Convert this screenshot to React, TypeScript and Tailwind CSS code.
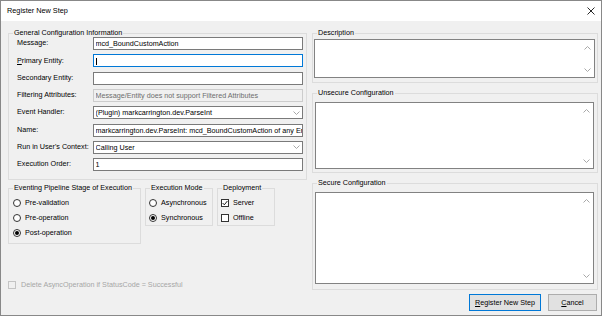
import React from 'react';

const Chevron = ({ up = false }: { up?: boolean }) => (
  <svg width="7" height="4" viewBox="0 0 7 4" className="block">
    <path d={up ? 'M0.5 3.5 L3.5 0.5 L6.5 3.5' : 'M0.5 0.5 L3.5 3.5 L6.5 0.5'} fill="none" stroke="#a8a8a8" strokeWidth="1" />
  </svg>
);

const Field = ({ label, children }: { label: React.ReactNode; children: React.ReactNode }) => (
  <div className="h-[17.3px] flex items-center">
    <div className="w-[76px] shrink-0">{label}</div>
    <div className="flex-1 min-w-0">{children}</div>
  </div>
);

const TextBox = ({ value, focused = false, disabled = false, combo = false }: { value?: string; focused?: boolean; disabled?: boolean; combo?: boolean }) => (
  <div
    className={`h-[13px] border flex items-center overflow-hidden whitespace-nowrap pl-[1.5px] ${
      focused ? 'border-[#0078d7] bg-white' : disabled ? 'border-[#cccccc] bg-[#f0f0f0] text-[#6d6d6d]' : 'border-[#7a7a7a] bg-white'
    }`}
  >
    <span className="flex-1 min-w-0 overflow-hidden leading-[11px]">
      {focused ? <span className="inline-block w-px h-[7px] bg-black align-middle ml-[0.5px]" /> : value}
    </span>
    {combo && (
      <span className="w-[12px] shrink-0 flex justify-center">
        <Chevron />
      </span>
    )}
  </div>
);

// group box: legend sits on the top line, padding goes on the inner div
const Group = ({ title, className, inner = '', children }: { title: string; className: string; inner?: string; children?: React.ReactNode }) => (
  <fieldset className={`border border-[#dcdcdc] min-w-0 ${className}`}>
    <legend className="ml-[4px] px-[1px] leading-[4px]">{title}</legend>
    <div className={inner}>{children}</div>
  </fieldset>
);

const Radio = ({ label, checked = false }: { label: string; checked?: boolean }) => (
  <div className="h-[15px] flex items-center gap-[4px]">
    <span className="w-[8px] h-[8px] rounded-full border border-[#333] bg-white flex items-center justify-center">
      {checked && <span className="w-[4px] h-[4px] rounded-full bg-black" />}
    </span>
    <span>{label}</span>
  </div>
);

const Check = ({ label, checked = false }: { label: string; checked?: boolean }) => (
  <div className="h-[15px] flex items-center gap-[4px]">
    <span className="w-[8px] h-[8px] border border-[#333] bg-white flex items-center justify-center">
      {checked && (
        <svg width="6" height="6" viewBox="0 0 6 6" className="block">
          <path d="M0.6 3 L2.3 4.8 L5.4 1" fill="none" stroke="#000" strokeWidth="0.9" />
        </svg>
      )}
    </span>
    <span>{label}</span>
  </div>
);

const TextArea = ({ h }: { h: string }) => (
  <div className={`${h} border border-[#828282] bg-white flex justify-end`}>
    <div className="w-[14px] flex flex-col items-center justify-between pt-[6px] pb-[5px]">
      <Chevron up />
      <Chevron />
    </div>
  </div>
);

export default function App() {
  return (
    <div className="w-[602px] h-[316px] border border-[#888] flex flex-col font-['Liberation_Sans',Arial,sans-serif] text-[7.2px] text-black">
      {/* title bar */}
      <div className="h-[20px] bg-white flex items-center justify-between pl-[6px] pr-[6px]">
        <span className="text-[7.3px]">Register New Step</span>
        <svg width="8" height="8" viewBox="0 0 8 8" className="block">
          <path d="M0.5 0.5 L7.5 7.5 M7.5 0.5 L0.5 7.5" stroke="#111" strokeWidth="0.9" />
        </svg>
      </div>

      <div className="flex-1 bg-[#f0f0f0] flex pl-[7px] pt-[10px]">
        {/* left column */}
        <div className="w-[299px] flex flex-col">
          <Group title="General Configuration Information" className="h-[149px]" inner="pl-[8px] pr-[3px]">
            <Field label="Message:">
              <TextBox value="mcd_BoundCustomAction" />
            </Field>
            <Field label={<><u>P</u>rimary Entity:</>}>
              <TextBox focused />
            </Field>
            <Field label="Secondary Entity:">
              <TextBox />
            </Field>
            <Field label="Filtering Attributes:">
              <TextBox disabled value="Message/Entity does not support Filtered Attributes" />
            </Field>
            <Field label="Event Handler:">
              <TextBox combo value="(Plugin) markcarrington.dev.ParseInt" />
            </Field>
            <Field label="Name:">
              <TextBox value="markcarrington.dev.ParseInt: mcd_BoundCustomAction of  any Er" />
            </Field>
            <Field label="Run in User's Context:">
              <TextBox combo value="Calling User" />
            </Field>
            <Field label="Execution Order:">
              <TextBox value="1" />
            </Field>
          </Group>

          <div className="flex mt-[6px]">
            <Group title="Eventing Pipeline Stage of Execution" className="w-[133px] h-[58px]" inner="pl-[4px] pt-[5.5px]">
              <Radio label="Pre-validation" />
              <Radio label="Pre-operation" />
              <Radio label="Post-operation" checked />
            </Group>
            <Group title="Execution Mode" className="ml-[4px] w-[68px] h-[40px]" inner="pl-[3px] pt-[5.5px]">
              <Radio label="Asynchronous" />
              <Radio label="Synchronous" checked />
            </Group>
            <Group title="Deployment" className="ml-[4px] w-[58px] h-[40px]" inner="pl-[3px] pt-[5.5px]">
              <Check label="Server" checked />
              <Check label="Offline" />
            </Group>
          </div>

          <div className="mt-[36px] flex items-center gap-[5px] text-[#a6a6a6]">
            <span className="w-[8px] h-[8px] border border-[#c4c4c4] bg-[#f0f0f0]" />
            <span>Delete AsyncOperation if StatusCode = Successful</span>
          </div>
        </div>

        {/* right column */}
        <div className="w-[286px] ml-[5px] flex flex-col">
          <Group title="Description" className="h-[52px]" inner="pl-[1px] pr-[2px] pt-[4.3px]">
            <TextArea h="h-[39px]" />
          </Group>
          <Group title="Unsecure Configuration" className="mt-[8px] h-[82px]" inner="pl-[2px] pr-[3px] pt-[6.7px]">
            <TextArea h="h-[67px]" />
          </Group>
          <Group title="Secure Configuration" className="mt-[8px] h-[109px]" inner="pl-[2px] pr-[3px] pt-[6.7px]">
            <TextArea h="h-[92px]" />
          </Group>
          <div className="mt-[4px] flex justify-end gap-[7px] pr-[1px]">
            <button className="w-[72px] h-[17px] border border-[#0078d7] bg-[#e1e1e1] leading-none">
              <u>R</u>egister New Step
            </button>
            <button className="w-[49px] h-[17px] border border-[#adadad] bg-[#e1e1e1] leading-none">
              <u>C</u>ancel
            </button>
          </div>
        </div>
      </div>
    </div>
  );
}
